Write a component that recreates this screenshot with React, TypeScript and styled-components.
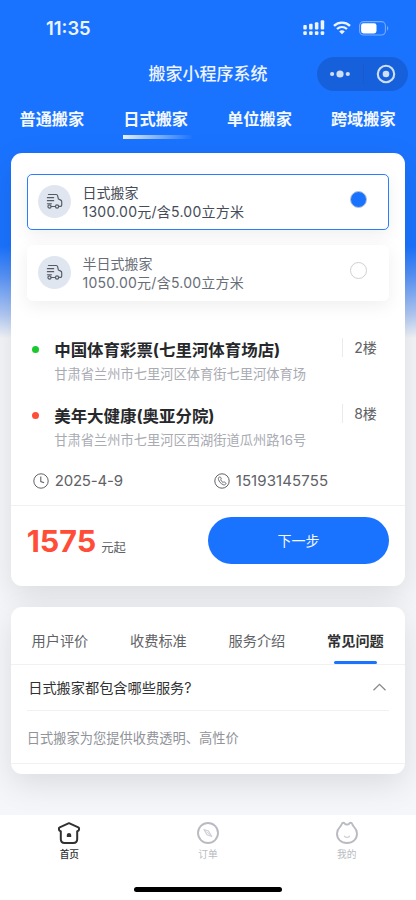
import React from "react";
import styled, { createGlobalStyle } from "styled-components";

const GlobalStyle = createGlobalStyle`
  * { box-sizing: border-box; }
  html, body { margin: 0; padding: 0; }
  body { font-family: Inter, "Noto Sans CJK SC", sans-serif; background: #f4f6f9; }
  svg { display: block; flex: none; }
`;

const BLUE = "#1a73ff";

const Screen = styled.div`
  width: 416px;
  height: 900px;
  overflow: hidden;
  display: flex;
  flex-direction: column;
  background: linear-gradient(
    180deg,
    ${BLUE} 0,
    ${BLUE} 246px,
    #5592f8 275px,
    #b3cbf5 315px,
    #f4f6f9 338px
  );
`;

const StatusBar = styled.div`
  height: 56px;
  flex: none;
  display: flex;
  justify-content: space-between;
  align-items: center;
  padding: 0 27px 0 46px;
  color: #eef4ff;
`;

const Clock = styled.div`
  font-size: 18.4px;
  line-height: 22px;
  font-weight: 600;
`;

const StatusIcons = styled.div`
  display: flex;
  align-items: center;
  gap: 8px;
`;

const NavBar = styled.div`
  height: 36px;
  flex: none;
  display: grid;
  grid-template-columns: 100px 1fr 100px;
  align-items: center;
  padding-right: 8px;
  padding-left: 8px;
`;

const NavTitle = styled.h1`
  grid-column: 2;
  margin: 0;
  text-align: center;
  font-size: 17px;
  line-height: 24px;
  font-weight: 500;
  color: #eef4ff;
`;

const Capsule = styled.div`
  justify-self: end;
  width: 91px;
  height: 34px;
  border-radius: 17px;
  background: #1661db;
  display: flex;
  align-items: center;
  justify-content: space-between;
  padding: 0 12.5px 0 13px;
  margin-top: -1px;
`;

const CapsuleRule = styled.span`
  width: 1px;
  height: 20px;
  margin-left: 1px;
  background: #1a5bca;
`;

const CategoryTabs = styled.nav`
  height: 60.5px;
  flex: none;
  display: grid;
  grid-template-columns: repeat(4, 103.8px);
  padding-top: 15px;
`;

const Category = styled.div<{ $active?: boolean }>`
  padding-left: 19.5px;
  color: #f4f8ff;
  font-size: 16.2px;
  line-height: 24px;
  font-weight: 700;
  &::after {
    content: "";
    display: block;
    width: 70px;
    height: 4px;
    margin-top: 4px;
    background: ${(p) =>
      p.$active ? "linear-gradient(90deg, #e6efff, rgba(230,239,255,0))" : "none"};
  }
`;

const Card = styled.section<{ $height: number; $gap?: number }>`
  width: 394.5px;
  height: ${(p) => p.$height}px;
  flex: none;
  margin: ${(p) => p.$gap ?? 0}px 10.7px 0;
  border-radius: 11px;
  background: #fff;
  box-shadow: 0 10px 32px rgba(0, 0, 0, 0.11);
`;

const Options = styled.div`
  display: flex;
  flex-direction: column;
  gap: 15.5px;
  padding: 21.5px 16px 0;
`;

const Option = styled.div<{ $active?: boolean }>`
  height: 55.5px;
  display: flex;
  align-items: center;
  padding: 0 21.5px 0 10.3px;
  border: 1.3px solid ${(p) => (p.$active ? "#2b7dff" : "#fff")};
  border-radius: 5px;
  background: #fff;
  color: ${(p) => (p.$active ? "#454c58" : "#686e78")};
  box-shadow: 0 5px 18px rgba(0, 0, 0, 0.065);
`;

const TruckBadge = styled.span`
  width: 33px;
  height: 33px;
  border-radius: 50%;
  background: #e0e6f0;
  display: flex;
  align-items: center;
  justify-content: center;
`;

const OptionText = styled.div`
  flex: 1;
  padding-left: 11.5px;
  margin-top: 0.6px;
  font-size: 14px;
  line-height: 19px;
`;

const OptionPrice = styled.div`
  font-size: 14px;
  letter-spacing: 0.25px;
`;

const Radio = styled.span<{ $active?: boolean }>`
  width: 17px;
  height: 17px;
  margin-bottom: 5px;
  border: 1px solid ${(p) => (p.$active ? "#b7c2d2" : "#cfcfd1")};
  border-radius: 50%;
  background: ${(p) => (p.$active ? BLUE : "#fff")};
`;

const Addresses = styled.div`
  padding: 37.5px 16px 0 21px;
`;

const Address = styled.div`
  height: 66px;
  display: grid;
  grid-template-columns: 22.5px 1fr 47px;
`;

const Dot = styled.span<{ $color: string }>`
  width: 7px;
  height: 7px;
  margin-top: 7.5px;
  border-radius: 50%;
  background: ${(p) => p.$color};
`;

const Place = styled.div`
  color: #26282b;
  font-size: 16.45px;
  line-height: 25px;
  font-weight: 700;
  white-space: nowrap;
`;

const Street = styled.div`
  color: #a9abb3;
  font-size: 13.25px;
  line-height: 22px;
  white-space: nowrap;
`;

const Floor = styled.div`
  height: 19px;
  border-left: 1.5px solid #e9eaed;
  padding-left: 11px;
  color: #606266;
  font-size: 14px;
  line-height: 19px;
`;

const Contact = styled.div`
  height: 36px;
  display: grid;
  grid-template-columns: 181px 1fr;
  padding: 0 0 0 22px;
  border-bottom: 1px solid #f1f1f3;
`;

const ContactItem = styled.div<{ $tracking: number }>`
  height: 21px;
  display: flex;
  align-items: center;
  gap: 6px;
  color: #606266;
  font-size: 15px;
  letter-spacing: ${(p) => p.$tracking}px;
`;

const Checkout = styled.div`
  display: flex;
  justify-content: space-between;
  align-items: flex-start;
  padding: 11px 16px 0;
`;

const Price = styled.div`
  margin-top: 4px;
  color: #ff4d38;
  font-size: 30.5px;
  line-height: 40px;
  font-weight: 700;
  display: flex;
  align-items: baseline;
  gap: 5px;
`;

const PriceUnit = styled.span`
  color: #606266;
  font-size: 12.3px;
  font-weight: 400;
`;

const NextButton = styled.button`
  width: 181.5px;
  height: 47px;
  padding: 0;
  border: 0;
  border-radius: 24px;
  background: ${BLUE};
  color: #f4f8ff;
  font: 400 14px/20px Inter, "Noto Sans CJK SC", sans-serif;
`;

const InfoTabs = styled.div`
  height: 58px;
  display: grid;
  grid-template-columns: repeat(4, 98.5px);
  border-bottom: 1px solid #f0f1f3;
`;

const InfoTab = styled.div<{ $active?: boolean }>`
  display: flex;
  flex-direction: column;
  align-items: center;
  padding-top: 24px;
  color: ${(p) => (p.$active ? "#303133" : "#606266")};
  font-size: 14.2px;
  line-height: 20px;
  font-weight: ${(p) => (p.$active ? 700 : 400)};
  &::after {
    content: "";
    width: 43px;
    height: 3px;
    flex: none;
    margin-top: 10px;
    border-radius: 2px;
    background: ${(p) => (p.$active ? BLUE : "transparent")};
  }
`;

const Question = styled.div`
  height: 46px;
  margin: 0 16px;
  padding: 0 3px 1px 1.5px;
  display: flex;
  align-items: center;
  justify-content: space-between;
  border-bottom: 1px solid #f0f1f3;
  color: #303133;
  font-size: 14.2px;
`;

const Answer = styled.div`
  height: 53px;
  padding: 1px 16px 0;
  display: flex;
  align-items: center;
  border-bottom: 1px solid #f0f1f3;
  color: #909399;
  font-size: 13.25px;
`;

const TabBar = styled.footer`
  height: 85px;
  flex: none;
  margin-top: auto;
  display: flex;
  flex-direction: column;
  align-items: center;
  justify-content: space-between;
  padding-bottom: 8px;
  background: #fff;
  position: relative;
`;

const TabBarItems = styled.div`
  display: grid;
  grid-template-columns: repeat(3, 138.67px);
`;

const TabBarItem = styled.div<{ $active?: boolean }>`
  display: flex;
  flex-direction: column;
  align-items: center;
  gap: 2px;
  padding-top: 5.5px;
  color: ${(p) => (p.$active ? "#303133" : "#b9bbc2")};
  font-size: 9.7px;
  line-height: 15px;
  font-weight: ${(p) => (p.$active ? 500 : 400)};
`;

const HomeIndicator = styled.div`
  width: 148px;
  height: 5.5px;
  border-radius: 3px;
  background: #000;
`;

const SignalIcon = () => (
  <svg width="22" height="16" viewBox="0 0 22 16" fill="currentColor">
    <rect x="0.3" y="5" width="3.5" height="4.5" rx="1" />
    <rect x="6.1" y="3.8" width="3.5" height="5.7" rx="1" />
    <rect x="11.9" y="2.2" width="3.5" height="7.3" rx="1" />
    <rect x="17.7" y="0.2" width="3.5" height="9.3" rx="1" />
    {[0.3, 6.1, 11.9, 17.7].map((x) => (
      <rect key={x} x={x} y="11.3" width="3.5" height="3.7" rx="1" />
    ))}
  </svg>
);

const WifiIcon = () => (
  <svg width="18" height="14" viewBox="0 0 18 14" fill="none" stroke="currentColor">
    <path d="M1 4.8C5.6.6 12.4.6 17 4.8" strokeWidth="2.4" />
    <path d="M4 8c2.9-2.6 7.1-2.6 10 0" strokeWidth="2.3" />
    <path d="M9 13.2 6.2 10.4c1.6-1.4 4-1.4 5.6 0z" fill="currentColor" stroke="none" />
  </svg>
);

const BatteryIcon = () => (
  <svg width="30" height="15" viewBox="0 0 30 15">
    <rect x="0.6" y="0.6" width="25.8" height="13.4" rx="4" fill="none" stroke="#78abff" strokeWidth="1.1" />
    <rect x="2.1" y="2.2" width="15.4" height="10.2" rx="2.4" fill="#fff" />
    <path d="M28 5c1.6.7 1.6 4 0 4.7z" fill="#78abff" />
  </svg>
);

const MoreIcon = () => (
  <svg width="20" height="8" viewBox="0 0 20 8" fill="#d0dff8">
    <circle cx="2.1" cy="4" r="2.1" />
    <circle cx="10" cy="4" r="3.6" />
    <circle cx="17.8" cy="4" r="2.1" />
  </svg>
);

const TargetIcon = () => (
  <svg width="20" height="20" viewBox="0 0 20 20" fill="none">
    <circle cx="10" cy="10" r="8.2" stroke="#d0dff8" strokeWidth="2.1" />
    <circle cx="10" cy="10" r="3.3" fill="#d0dff8" />
  </svg>
);

const TruckIcon = () => (
  <svg width="17" height="17" viewBox="0 0 16 16" fill="none" stroke="#555a64" strokeWidth="1.1" strokeLinecap="round" strokeLinejoin="round">
    <path d="M2.3 1.4h7.4c.9 0 1 .3 1.2 1.100l.8 3.200 2.200 1c.7.3.9.7.9 1.500v3.200c0 .8-.3 1.200-1.100 1.200h-1.300M8.900 12.700H4.800" />
    <path d="M1.3 4.4h5.9M1.3 7.2h5.9M1.3 10.1h3.8" />
    <circle cx="3.3" cy="12.7" r="1.5" />
    <circle cx="10.4" cy="12.7" r="1.5" />
  </svg>
);

const ClockIcon = () => (
  <svg width="16" height="16" viewBox="0 0 16 16" fill="none" stroke="currentColor" strokeWidth="1">
    <circle cx="8" cy="8" r="7.2" />
    <path d="M7.8 3.5v5l3.3 1.2" strokeWidth="1.1" />
  </svg>
);

const PhoneIcon = () => (
  <svg width="16" height="16" viewBox="0 0 16 16" fill="none" stroke="currentColor" strokeWidth="1">
    <circle cx="8" cy="8" r="7.2" />
    <path
      d="M5.2 4.1c.6-.5 1.1-.3 1.5.4l.5.9c.3.6-.1.9-.5 1.3.4 1.2 1.3 2.2 2.4 2.8.5-.5.9-.8 1.5-.4l.9.6c.6.5.6 1 .1 1.5-.7.8-1.6.9-2.6.4C6.8 10.5 5.1 8.7 4.5 6.5c-.3-.9-.1-1.7.7-2.4z"
      strokeWidth="0.95"
    />
  </svg>
);

const ChevronUp = () => (
  <svg width="13" height="8" viewBox="0 0 13 8" fill="none" stroke="#88898b" strokeWidth="1.3">
    <path d="m.5 7.3 6-6 6 6" />
  </svg>
);

const HomeIcon = () => (
  <svg width="24" height="24" viewBox="0 0 24 24" fill="none" stroke="#303133" strokeWidth="2" strokeLinejoin="round">
    <path d="M12 2.2 2.7 6.4c-.7.4-.9.8-.8 1.400l.3 1.500 1.600 1v7.700c0 2.900 1.100 4 3.900 4h8.600c2.800 0 3.900-1.100 3.900-4v-7.700l1.600-1 .3-1.500c.1-.6-.1-1-.8-1.400z" />
    <path d="M9.800 16v-1.900c0-2.900 4.400-2.900 4.400 0V16z" fill="#303133" stroke="none" />
  </svg>
);

const OrderIcon = () => (
  <svg width="24" height="24" viewBox="0 0 24 24" fill="none" stroke="#b9bbc2">
    <circle cx="12" cy="12" r="10" strokeWidth="1.9" />
    <path d="M8 8.5l4.5 1.5 3.2 5.5-4.7-1.8z" stroke="#cfd0d5" strokeWidth="1.3" strokeLinejoin="round" />
    <path d="M10.5 10.5l3 3" stroke="#d8d9dd" />
  </svg>
);

const ProfileIcon = () => (
  <svg width="24" height="24" viewBox="0 0 24 24" fill="none" stroke="#b9bbc2" strokeWidth="1.9" strokeLinejoin="round" strokeLinecap="round">
    <path d="M6.6 3.3c.8-2 2.6-2 3.7-.1l1.7.3 1.7-.3c1.1-1.9 2.9-1.9 3.7.1.4 1 .7 1.6 1.6 2.5 1.9 1.9 3 4.2 3 6.7C22 18.3 18 22 12 22S2 18.3 2 12.5c0-2.5 1.1-4.8 3-6.7.9-.9 1.2-1.5 1.6-2.500z" />
    <path d="M9.5 15.3c1.4 1.5 3.6 1.5 5 0" stroke="#d2d3d8" strokeWidth="1.5" />
  </svg>
);

const categories = ["普通搬家", "日式搬家", "单位搬家", "跨域搬家"];

const options = [
  { name: "日式搬家", price: "1300.00元/含5.00立方米" },
  { name: "半日式搬家", price: "1050.00元/含5.00立方米" },
];

const addresses = [
  { color: "#19c92c", place: "中国体育彩票(七里河体育场店)", street: "甘肃省兰州市七里河区体育街七里河体育场", floor: "2楼" },
  { color: "#ff4d38", place: "美年大健康(奥亚分院)", street: "甘肃省兰州市七里河区西湖街道瓜州路16号", floor: "8楼" },
];

const infoTabs = ["用户评价", "收费标准", "服务介绍", "常见问题"];

export default function App() {
  return (
    <Screen>
      <GlobalStyle />
      <StatusBar>
        <Clock>11:35</Clock>
        <StatusIcons>
          <SignalIcon />
          <WifiIcon />
          <BatteryIcon />
        </StatusIcons>
      </StatusBar>
      <NavBar>
        <NavTitle>搬家小程序系统</NavTitle>
        <Capsule>
          <MoreIcon />
          <CapsuleRule />
          <TargetIcon />
        </Capsule>
      </NavBar>
      <CategoryTabs>
        {categories.map((name, i) => (
          <Category key={name} $active={i === 1}>{name}</Category>
        ))}
      </CategoryTabs>

      <Card $height={433}>
        <Options>
          {options.map((option, i) => (
            <Option key={option.name} $active={i === 0}>
              <TruckBadge><TruckIcon /></TruckBadge>
              <OptionText>
                {option.name}
                <OptionPrice>{option.price}</OptionPrice>
              </OptionText>
              <Radio $active={i === 0} />
            </Option>
          ))}
        </Options>
        <Addresses>
          {addresses.map((a) => (
            <Address key={a.place}>
              <Dot $color={a.color} />
              <div>
                <Place>{a.place}</Place>
                <Street>{a.street}</Street>
              </div>
              <Floor>{a.floor}</Floor>
            </Address>
          ))}
        </Addresses>
        <Contact>
          <ContactItem $tracking={-0.2}><ClockIcon />2025-4-9</ContactItem>
          <ContactItem $tracking={0.1}><PhoneIcon />15193145755</ContactItem>
        </Contact>
        <Checkout>
          <Price>1575<PriceUnit>元起</PriceUnit></Price>
          <NextButton>下一步</NextButton>
        </Checkout>
      </Card>

      <Card $height={167.5} $gap={21}>
        <InfoTabs>
          {infoTabs.map((name, i) => (
            <InfoTab key={name} $active={i === 3}>{name}</InfoTab>
          ))}
        </InfoTabs>
        <Question>日式搬家都包含哪些服务?<ChevronUp /></Question>
        <Answer>日式搬家为您提供收费透明、高性价</Answer>
      </Card>

      <TabBar>
        <TabBarItems>
          <TabBarItem $active><HomeIcon />首页</TabBarItem>
          <TabBarItem><OrderIcon />订单</TabBarItem>
          <TabBarItem><ProfileIcon />我的</TabBarItem>
        </TabBarItems>
        <HomeIndicator />
      </TabBar>
    </Screen>
  );
}
